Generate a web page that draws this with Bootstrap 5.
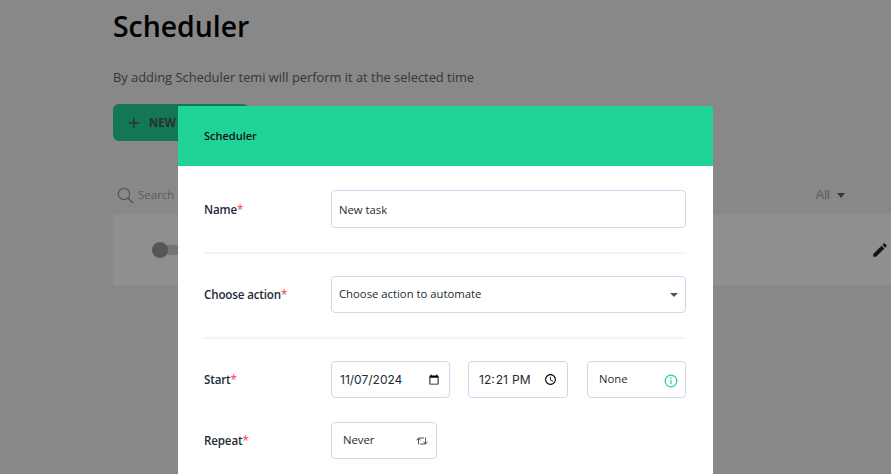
<!doctype html>
<html lang="en"><head><meta charset="utf-8"><title>Scheduler</title>
<link href="https://cdn.jsdelivr.net/npm/bootstrap@5.3.0/dist/css/bootstrap.min.css" rel="stylesheet">
<style>
html,body{height:100%;overflow:hidden}
body{background:#f3f3f3;font-family:"Open Sans",sans-serif;color:#212b36}
.page-wrap{padding:0 0 0 113px;height:474px;overflow:hidden}
.page-title{font-size:28.4px;font-weight:550;line-height:41px;margin:6px 0 0;color:#000}
.page-sub{font-size:12.87px;line-height:20px;margin:20px 0 0;color:#5a6270}
.new-btn{width:136px;height:37px;margin-top:17px;background:#21d39b;border:0;border-radius:6px;padding:0 0 0 15px;font-size:11.5px;font-weight:700;color:#555;gap:9px}
.filter-row{height:24px;margin:42px 0 7px;padding-left:4px;font-size:11.5px;color:#a5a5a5}
.all-pick{margin-right:46px;gap:7px;font-size:13px;font-family:"Liberation Sans",sans-serif;color:#a5a5a5;margin-left:-1px}
.caret-down{width:0;height:0;border-left:4.5px solid transparent;border-right:4.5px solid transparent;border-top:5px solid #666}
.task-card{height:71px;background:#fff;padding:0 2px 0 39px}
.switch-track{width:30px;height:10px;background:#d1d1d1;border-radius:5px;position:relative}
.switch-knob{width:16px;height:16px;border-radius:50%;background:#999;position:absolute;left:0;top:-3px}
.shade{position:fixed;inset:0;background:rgba(0,0,0,.44)}
.sheet{position:fixed;left:178px;top:106px;width:535px;height:368px;background:#fff;overflow:hidden}
.sheet-head{height:60px;background:#20d399;padding:1px 0 0 26px;font-size:11px;font-weight:600;color:#111}
.sheet-body{padding:24px 27px 0 26px}
.field-name{width:127px;flex:none;font-size:11.6px;letter-spacing:-.15px;font-weight:600;color:#212b36;padding-top:1px}
.req{color:#ff5c5c}
.field-line{border-top:2px solid #f1f5fb;opacity:1;margin:24px 0 22px}
.sheet .form-control,.box-ctl{height:37px;border:1px solid #cdd9f0;border-radius:4px;font-size:11.3px;color:#212b36;padding:0 7px;font-family:"Open Sans",sans-serif;box-shadow:none}
.sheet .name-ctl{height:38px}
.sheet input[type=date],.sheet input[type=time]{font-family:"Inter",sans-serif;font-size:12px;padding:0 7px 0 8px}
.w-date{width:119px;flex:none}.w-time{width:100px;flex:none;margin-left:18px}
.sheet input.w-time{padding-left:10px}
.w-tz{width:99px;flex:none;margin-left:19px;padding:0 7px 0 11px!important}
.w-rep{width:106px;padding:0 8px 0 11px!important}
.start-row{margin-bottom:24px}
.act-caret{border-left-width:4px;border-right-width:4px;border-top-width:4px;border-top-color:#555}
.tz-info{margin-top:2px}
</style></head><body>
<div class="page-wrap">
  <h1 class="page-title">Scheduler</h1>
  <p class="page-sub">By adding Scheduler temi will perform it at the selected time</p>
  <button class="new-btn d-flex align-items-center" type="button">
    <svg width="12" height="12" viewBox="0 0 12 12"><path d="M6 1v10M1 6h10" stroke="#555" stroke-width="1.3"/></svg><span>NEW TASK</span>
  </button>
  <div class="filter-row d-flex align-items-center justify-content-between">
    <div class="d-flex align-items-center gap-1">
      <svg width="17" height="17" viewBox="0 0 17 17" fill="none" stroke="#999" stroke-width="1.2"><circle cx="7" cy="7" r="5.6"/><path d="M11 11l5 5" stroke-width="1.6"/></svg>
      <span>Search</span>
    </div>
    <div class="all-pick d-flex align-items-center"><span>All</span><i class="caret-down"></i></div>
  </div>
  <div class="task-card d-flex align-items-center justify-content-between">
    <div class="switch-track"><div class="switch-knob"></div></div>
    <svg width="18" height="18" viewBox="0 0 24 24" fill="#222"><path d="M3 17.25V21h3.75L17.81 9.94l-3.75-3.75L3 17.25zM20.71 7.04a1 1 0 0 0 0-1.41l-2.34-2.34a1 1 0 0 0-1.41 0l-1.83 1.83 3.75 3.75 1.83-1.83z"/></svg>
  </div>
</div>
<div class="shade"></div>
<div class="sheet">
  <div class="sheet-head d-flex align-items-center">Scheduler</div>
  <div class="sheet-body">
    <div class="d-flex align-items-center">
      <div class="field-name">Name<span class="req">*</span></div>
      <input class="form-control name-ctl" value="New task">
    </div>
    <hr class="field-line">
    <div class="d-flex align-items-center">
      <div class="field-name">Choose action<span class="req">*</span></div>
      <div class="box-ctl d-flex align-items-center justify-content-between flex-grow-1"><span>Choose action to automate</span><i class="caret-down act-caret"></i></div>
    </div>
    <hr class="field-line">
    <div class="start-row d-flex align-items-center">
      <div class="field-name">Start<span class="req">*</span></div>
      <input class="form-control w-date" type="date" value="2024-11-07">
      <input class="form-control w-time" type="time" value="12:21">
      <div class="box-ctl w-tz d-flex align-items-center justify-content-between"><span>None</span>
        <svg class="tz-info" width="14" height="14" viewBox="0 0 14 14" fill="none" stroke="#21d39b" stroke-width="1.2"><circle cx="7" cy="7" r="5.8"/><path d="M7 6v4M7 3.6v1.3"/></svg>
      </div>
    </div>
    <div class="d-flex align-items-center">
      <div class="field-name">Repeat<span class="req">*</span></div>
      <div class="box-ctl w-rep d-flex align-items-center justify-content-between"><span>Never</span>
        <svg width="12" height="10" viewBox="0 0 12 10" fill="none" stroke="#555" stroke-width="1"><path d="M2.5 8.5V2H8M.5 4.3L2.5 2l2 2.3M9.5 1.5V8H4M7.5 5.7L9.5 8l2-2.3"/></svg>
      </div>
    </div>
  </div>
</div>
<script src="https://cdn.jsdelivr.net/npm/bootstrap@5.3.0/dist/js/bootstrap.bundle.min.js"></script>
</body></html>
